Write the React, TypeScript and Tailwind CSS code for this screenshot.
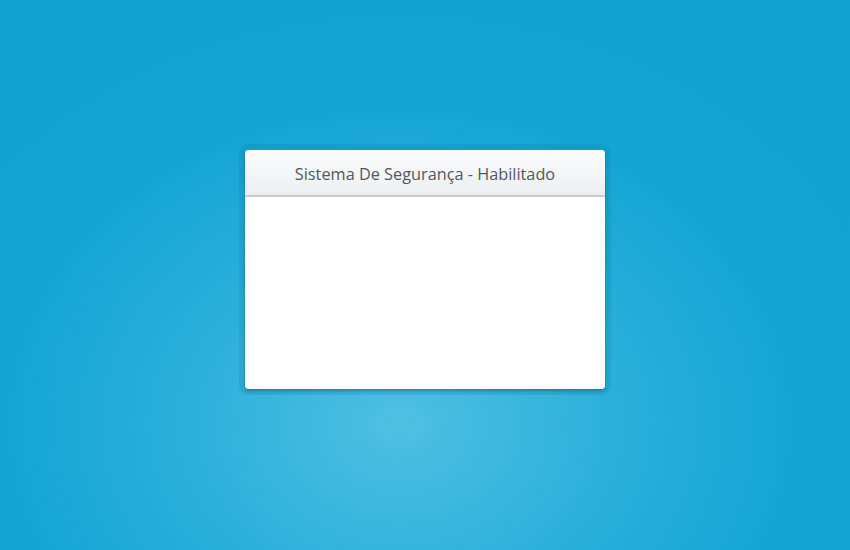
export default function App() {
  return (
    <div className="w-[850px] h-[550px] flex flex-col items-center pt-[150px] bg-[radial-gradient(ellipse_520px_420px_at_400px_425px,#4fc0e2_0%,#2cb0db_40%,#15a5d4_75%,#13a3d2_100%)] font-['Open_Sans',sans-serif]">
      <div className="w-[360px] rounded-[4px] bg-white shadow-[0_0_0_6px_rgba(10,100,140,0.14),0_2px_3px_rgba(0,40,70,0.35)] overflow-hidden">
        <div className="h-[47px] flex items-center justify-center pt-[3px] bg-gradient-to-b from-[#fbfcfd] to-[#eceff1] border-b-2 border-[#c9ccce]">
          <span className="text-[16.3px] text-[#53585c]">Sistema De Segurança - Habilitado</span>
        </div>
        <div className="h-[192px] bg-white" />
      </div>
    </div>
  );
}
